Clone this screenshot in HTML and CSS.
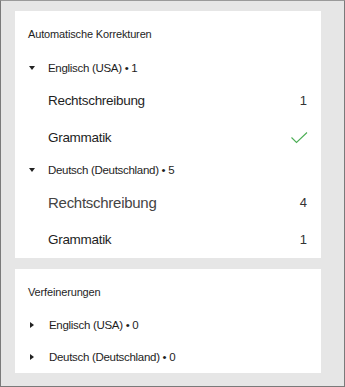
FILE: index.html
```html
<!DOCTYPE html>
<html lang="de">
<head>
    <meta charset="utf-8" />
    <meta name="viewport" content="width=device-width, initial-scale=1" />
    <title>Korrekturen</title>
    <link rel="stylesheet" href="styles.css">
</head>
<body>
    <div class="pane">
        <div class="card card-auto">
            <div class="card-title">Automatische Korrekturen</div>

            <div class="group">
                <span class="caret caret-down"></span>
                <span>Englisch (USA) • 1</span>
            </div>
            <div class="item">
                <span>Rechtschreibung</span>
                <span class="count">1</span>
            </div>
            <div class="item">
                <span>Grammatik</span>
                <svg class="check" width="17" height="12" viewBox="0 0 17 12">
                    <path d="M0.5 5.5 L5.5 10.5 L16 0.5" fill="none" stroke="#4cae55" stroke-width="1.1" />
                </svg>
            </div>

            <div class="group">
                <span class="caret caret-down"></span>
                <span>Deutsch (Deutschland) • 5</span>
            </div>
            <div class="item item-large">
                <span>Rechtschreibung</span>
                <span class="count">4</span>
            </div>
            <div class="item">
                <span>Grammatik</span>
                <span class="count">1</span>
            </div>
        </div>

        <div class="card card-refine">
            <div class="card-title">Verfeinerungen</div>

            <div class="group group-closed">
                <span class="caret caret-right"></span>
                <span>Englisch (USA) • 0</span>
            </div>
            <div class="group group-closed">
                <span class="caret caret-right"></span>
                <span>Deutsch (Deutschland) • 0</span>
            </div>
        </div>
    </div>
</body>
</html>
```

FILE: styles.css
```css
* {
    margin: 0;
    padding: 0;
    box-sizing: border-box;
}

body {
    font-family: "Liberation Sans", Arial, sans-serif;
    color: #1e1e1e;
    background: #e6e6e6;
}

.pane {
    width: 345px;
    height: 387px;
    background: #e6e6e6;
    border: 1px solid #7a7a7a;
    border-top-color: #9a9a9a;
    padding: 10px 0 0 14px;
    display: flex;
    flex-direction: column;
    gap: 11px;
}

.card {
    width: 306px;
    background: #fff;
    padding: 0 14px 0 13px;
}

.card-auto {
    height: 247px;
    padding-top: 3px;
}

.card-refine {
    height: 104px;
    padding-top: 6px;
}

.card-title {
    height: 40px;
    display: flex;
    align-items: center;
    font-size: 11px;
    letter-spacing: -0.15px;
}

.card-refine .card-title {
    height: 34px;
}

.group {
    height: 28px;
    display: flex;
    align-items: center;
    font-size: 11.5px;
    letter-spacing: -0.3px;
}

.group-closed {
    height: 32px;
}

.caret {
    width: 20px;
    flex: none;
    display: flex;
    align-items: center;
}

.caret-down::before {
    content: "";
    margin-left: 1px;
    border-left: 3.5px solid transparent;
    border-right: 3.5px solid transparent;
    border-top: 4px solid #222;
}

.caret-right::before {
    content: "";
    margin-left: 2px;
    border-top: 3.5px solid transparent;
    border-bottom: 3.5px solid transparent;
    border-left: 4px solid #222;
}

.group-closed .caret {
    width: 21px;
}

.item {
    height: 37px;
    padding-left: 20px;
    display: flex;
    align-items: center;
    justify-content: space-between;
    font-size: 13.5px;
    letter-spacing: -0.3px;
}

.item-large {
    font-size: 15px;
    letter-spacing: -0.27px;
    color: #444;
}

.count {
    font-size: 13px;
    letter-spacing: 0;
    color: #333;
}

.check {
    margin-right: -1px;
}
```
